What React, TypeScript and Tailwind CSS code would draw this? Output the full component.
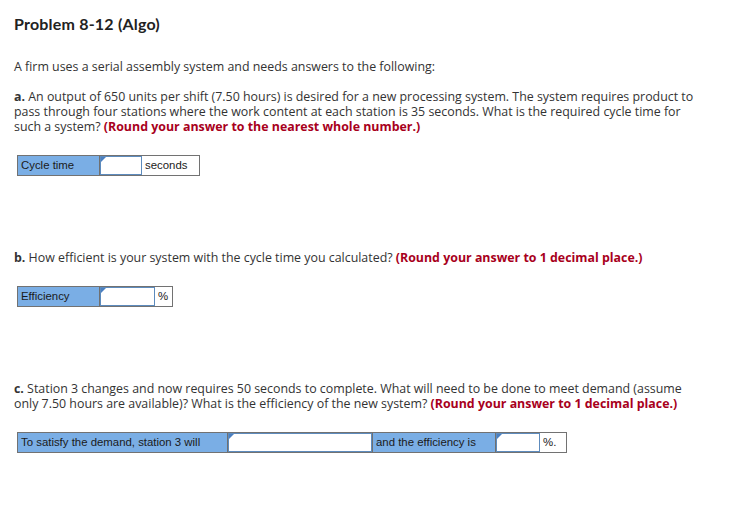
import React from "react";

const Corner = () => (
  <span className="absolute left-0 top-0 w-0 h-0 border-t-[5px] border-t-[#4a7fc1] border-r-[5px] border-r-transparent" />
);

function InputCell({ w }: { w: string }) {
  return (
    <div className={`relative ${w} h-full bg-white border-[1.5px] border-[#5d8bbd]`}>
      <Corner />
    </div>
  );
}

function Label({ w, children }: { w: string; children: React.ReactNode }) {
  return (
    <div className={`${w} h-full bg-[#7aaee5] flex items-center pl-[3px] text-[#1a1a1a] border-r border-[#707070] whitespace-nowrap`}>
      {children}
    </div>
  );
}

function Unit({ w, children }: { w: string; children: React.ReactNode }) {
  return <div className={`${w} h-full bg-white flex items-center pl-[3px] text-[#1a1a1a] whitespace-nowrap`}>{children}</div>;
}

const Red = ({ children }: { children: React.ReactNode }) => (
  <span className="font-bold text-[#a8001c]">{children}</span>
);

const tableCls =
  "mt-[21px] ml-[3px] flex w-fit h-[21px] border-[1.5px] border-[#727272] font-['Liberation_Sans',Arial,sans-serif] text-[11.4px]";

export default function App() {
  return (
    <div className="w-[752px] h-[507px] bg-white text-[#333] font-['Open_Sans',sans-serif] text-[12.4px] leading-[15px] pl-[14px] pt-[14px]">
      <h1 className="text-[16px] font-bold text-[#222] leading-[20px] font-['Lato',sans-serif] tracking-[0.2px]">Problem 8-12 (Algo)</h1>
      <div className="w-[690px]">
        <p className="mt-[25px]">A firm uses a serial assembly system and needs answers to the following:</p>
        <p className="mt-[15px]">
          <b>a.</b> An output of 650 units per shift (7.50 hours) is desired for a new processing system. The system requires product to pass through four stations where the work content at each station is 35 seconds. What is the required cycle time for such a system? <Red>(Round your answer to the nearest whole number.)</Red>
        </p>
      </div>
      <div className={tableCls}>
        <Label w="w-[82px]">Cycle time</Label>
        <InputCell w="w-[42px]" />
        <Unit w="w-[57px]">seconds</Unit>
      </div>
      <p className="mt-[74px] w-[690px]">
        <b>b.</b> How efficient is your system with the cycle time you calculated? <Red>(Round your answer to 1 decimal place.)</Red>
      </p>
      <div className={tableCls}>
        <Label w="w-[82px]">Efficiency</Label>
        <InputCell w="w-[55px]" />
        <Unit w="w-[17px]">%</Unit>
      </div>
      <p className="mt-[74px] w-[690px]">
        <b>c.</b> Station 3 changes and now requires 50 seconds to complete. What will need to be done to meet demand (assume only 7.50 hours are available)? What is the efficiency of the new system? <Red>(Round your answer to 1 decimal place.)</Red>
      </p>
      <div className={tableCls}>
        <Label w="w-[210px]">To satisfy the demand, station 3 will</Label>
        <InputCell w="w-[144px]" />
        <div className="w-[124px] h-full bg-[#7aaee5] flex items-center pl-[3px] text-[#1a1a1a] border-l border-r border-[#707070] whitespace-nowrap">and the efficiency is</div>
        <InputCell w="w-[44px]" />
        <Unit w="w-[26px]">%.</Unit>
      </div>
    </div>
  );
}
